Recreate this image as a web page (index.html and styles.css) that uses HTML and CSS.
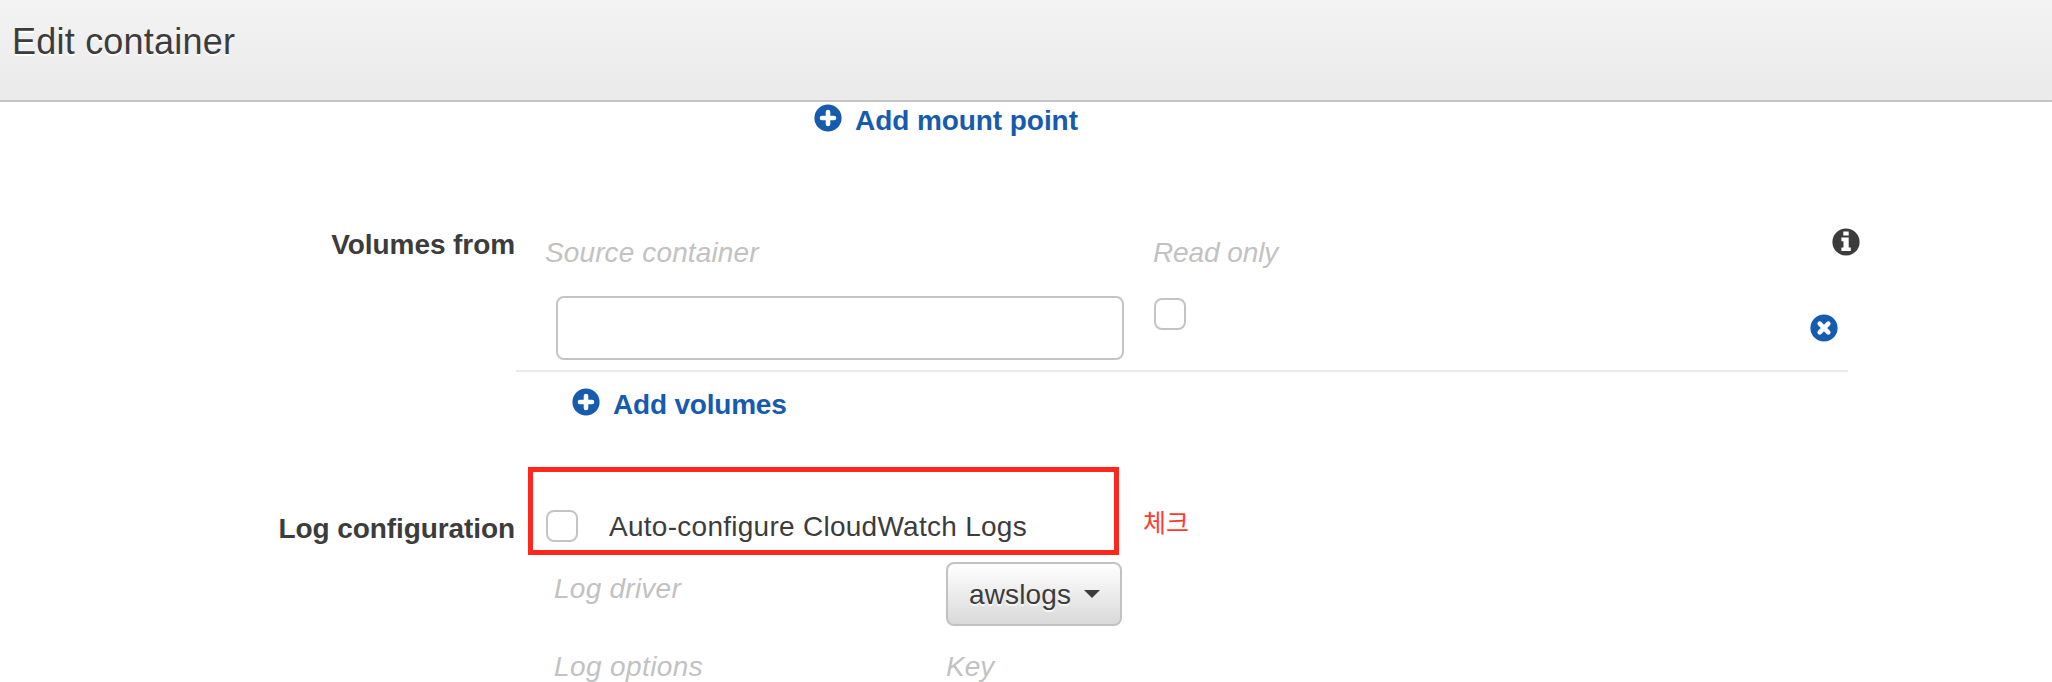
FILE: index.html
```html
<!DOCTYPE html>
<html lang="en">
<head>
<meta charset="utf-8">
<title>Edit container</title>
<link rel="stylesheet" href="styles.css">
</head>
<body>
<header class="header"><h1 class="title">Edit container</h1></header>
<main>
  <a class="add add-mount">
    <svg class="icon" viewBox="0 0 28 28"><circle cx="14" cy="14" r="13.6"/><path d="M14 8v12M8 14h12"/></svg>
    <span class="mount-text">Add mount point</span>
  </a>
  <section class="section volumes">
    <div class="label"><span class="label-volumes">Volumes from</span></div>
    <div class="content">
      <div class="heads">
        <span class="hint head-source">Source container</span>
        <span class="hint head-read">Read only</span>
        <svg class="icon info" viewBox="0 0 28 28"><circle cx="14" cy="14" r="13.6"/><path d="M11.3 3.5h5.4v4h-5.4zM9.4 9.4h7.3v10h2.1v3.6H9.4v-3.6h2.1v-6.2H9.4z"/></svg>
      </div>
      <div class="fields">
        <input class="source" type="text" aria-label="Source container">
        <input class="check check-read" type="checkbox" aria-label="Read only">
        <svg class="icon remove" viewBox="0 0 28 28"><circle cx="14" cy="14" r="13.6"/><path d="M9.7 9.7l8.6 8.6M18.3 9.7l-8.6 8.6"/></svg>
      </div>
      <a class="add add-volume">
        <svg class="icon" viewBox="0 0 28 28"><circle cx="14" cy="14" r="13.6"/><path d="M14 8v12M8 14h12"/></svg>
        <span class="volume-text">Add volumes</span>
      </a>
    </div>
  </section>
  <section class="section logs">
    <div class="label"><span class="label-log">Log configuration</span></div>
    <div class="content">
      <div class="auto-row">
        <label class="marked"><input class="check" type="checkbox"><span class="auto-text">Auto-configure CloudWatch Logs</span></label>
        <span class="note" lang="ko">체크</span>
      </div>
      <div class="option driver">
        <span class="hint name-driver">Log driver</span>
        <button class="dropdown"><span class="drop-text">awslogs</span><span class="caret"></span></button>
      </div>
      <div class="option keys">
        <span class="hint name-options">Log options</span>
        <span class="hint name-key">Key</span>
      </div>
    </div>
  </section>
</main>
</body>
</html>
```
FILE: styles.css
```css
* { box-sizing: border-box; }
body {
  margin: 0;
  height: 682px;
  overflow: hidden;
  background: #fff;
  color: #3c3c3c;
  font: 28px/38px "Liberation Sans", Arial, sans-serif;
}
.header {
  height: 102px;
  padding: 18px 12px 0;
  border-bottom: 2px solid #c4c4c4;
  background: linear-gradient(#f3f3f3, #eaeaea);
}
.title {
  margin: 0;
  font-size: 36px;
  line-height: 48px;
  font-weight: 400;
  letter-spacing: 0.22px;
  text-shadow: 0 2px 0 #fff;
}
span { white-space: nowrap; }
.add {
  display: flex;
  color: #165bae;
  font-weight: 700;
}
.icon { width: 28px; height: 28px; flex: none; fill: #165bae; }
.icon path { stroke: #fff; stroke-width: 4.6; stroke-linecap: round; }
.add .icon { margin: 2px 13px 0 0; }
.add-mount { padding-left: 814px; }
.mount-text { letter-spacing: -0.07px; }
.volume-text { letter-spacing: -0.2px; }
.section { display: grid; grid-template-columns: 516px 1fr; }
.label { padding-right: 1px; font-weight: 700; text-align: right; }
.label-volumes, .label-log { letter-spacing: -0.08px; }
.hint { color: #c2c2c2; font-style: italic; }
.volumes { padding-top: 86px; }
.content { display: flex; flex-direction: column; }
.heads { display: flex; height: 70px; padding-left: 29px; }
.heads .hint { padding-top: 8px; }
.head-source { width: 608px; letter-spacing: 0.12px; }
.head-read { width: 679px; letter-spacing: -0.1px; }
.info { fill: #3c3c3c; margin-top: 2px; }
.info path { fill: #fff; stroke: none; }
.fields {
  display: flex;
  width: 1332px;
  height: 76px;
  padding-left: 40px;
  border-bottom: 2px solid #eaeaea;
}
.source {
  width: 568px;
  height: 64px;
  margin: 0 30px 0 0;
  border: 2px solid #c4c4c4;
  border-radius: 8px;
  background: #fff;
}
.check {
  appearance: none;
  flex: none;
  width: 32px;
  height: 32px;
  margin: 0;
  border: 2px solid #c4c4c4;
  border-radius: 8px;
  background: #fff;
}
.check-read { margin: 2px 624px 0 0; }
.remove { margin-top: 18px; }
.add-volume { padding: 14px 0 0 56px; }
.logs { padding-top: 43px; }
.logs .label { padding-top: 43px; }
.auto-row { display: flex; height: 88px; padding-left: 12px; }
.marked {
  display: flex;
  width: 591px;
  height: 88px;
  padding: 38px 0 0 13px;
  border: 5px solid #ff261c;
}
.auto-text { margin: -2px 0 0 31px; letter-spacing: 0.27px; }
.note {
  margin: 36px 0 0 24px;
  color: #ff3b30;
  font: 400 25px/36px "Noto Sans CJK KR", sans-serif;
}
.option { display: flex; padding-left: 38px; }
.driver { margin-top: 7px; }
.driver .hint { padding-top: 8px; }
.name-driver, .name-options { width: 392px; }
.name-driver { letter-spacing: 0.25px; }
.name-options { letter-spacing: 0.4px; }
.keys { margin-top: 22px; }
.dropdown {
  display: flex;
  align-items: center;
  width: 176px;
  height: 64px;
  padding: 2px 20px 0 21px;
  border: 2px solid #c2c2c2;
  border-radius: 8px;
  background: linear-gradient(#fff, #d9d9d9);
  color: #3c3c3c;
  font: inherit;
  text-shadow: 0 2px 0 #f8f8f8;
}
.drop-text { letter-spacing: 0.15px; }
.caret {
  margin: -2px 0 0 auto;
  border: 8px solid transparent;
  border-top-color: #3c3c3c;
  border-bottom: 0;
}
```
